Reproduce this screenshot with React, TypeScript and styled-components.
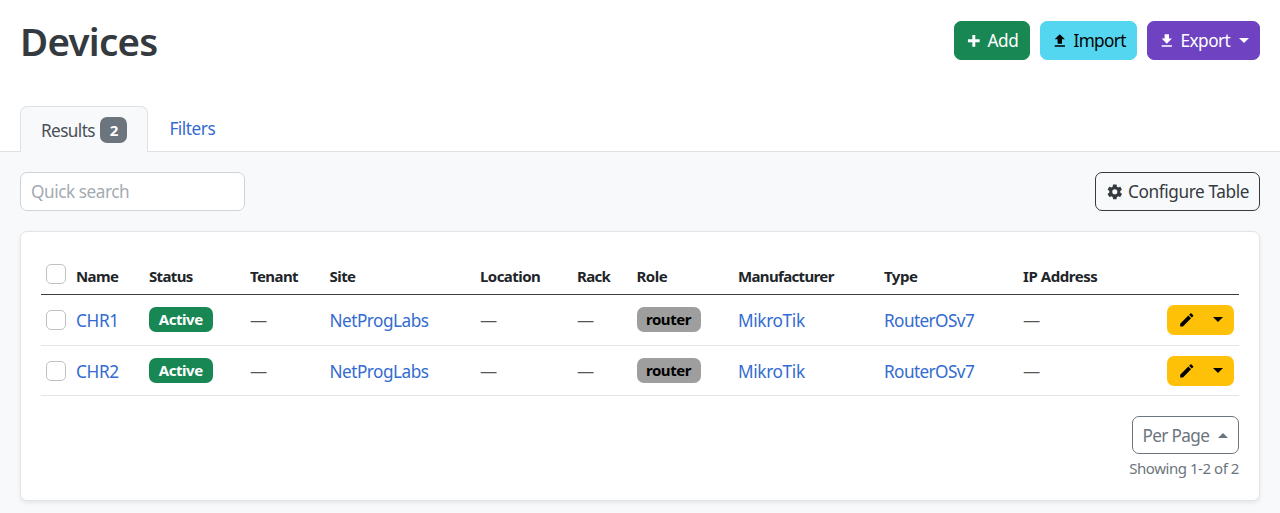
import React from "react";
import styled, { createGlobalStyle } from "styled-components";

const GlobalStyle = createGlobalStyle`
  * { box-sizing: border-box; }
  body {
    margin: 0;
    background: #f8f9fb;
    color: #212529;
    font-family: "Noto Sans", "Open Sans", sans-serif;
    font-size: 17.2px;
    line-height: 26px;
  }
`;

const Page = styled.main`
  height: 513px;
  overflow: hidden;
`;

const Header = styled.header`
  display: flex;
  justify-content: space-between;
  align-items: flex-start;
  height: 106px;
  padding: 21px 20px 0;
  background: #fff;
`;

const Title = styled.h1`
  margin: -1px 0 0;
  font-size: 38.5px;
  line-height: 42px;
  font-weight: 600;
  letter-spacing: -0.75px;
  color: #343a40;
`;

const Actions = styled.div`
  display: flex;
  gap: 10.5px;
`;

const Button = styled.button<{ $bg?: string; $fg: string; $width: number; $height?: number; $outline?: string; $ls?: number }>`
  display: flex;
  align-items: center;
  width: ${(p) => p.$width}px;
  height: ${(p) => p.$height ?? 39}px;
  padding: 0 10px;
  border: 1px solid ${(p) => p.$outline ?? p.$bg};
  border-radius: 7px;
  background: ${(p) => p.$bg ?? "transparent"};
  color: ${(p) => p.$fg};
  font: inherit;
  letter-spacing: ${(p) => p.$ls ?? -0.4}px;
  white-space: nowrap;
  svg { flex: none; margin-right: 4.5px; }
`;

const PerPageButton = styled(Button)`
  padding-top: 2px;
`;

const Caret = styled.span<{ $up?: boolean }>`
  margin-left: auto;
  border: 5px solid transparent;
  border-width: ${(p) => (p.$up ? "0 5px 5px" : "5px 5px 0")};
  border-${(p) => (p.$up ? "bottom" : "top")}-color: currentColor;
`;

const Tabs = styled.nav`
  display: flex;
  height: 46px;
  padding-left: 20px;
  background: #fff;
  border-bottom: 1px solid #dee2e6;
`;

const Tab = styled.a<{ $active?: boolean }>`
  display: flex;
  align-items: center;
  height: 46px;
  padding: ${(p) => (p.$active ? "2px 20px 0" : "0 20px 2px 20px")};
  border: 1px solid ${(p) => (p.$active ? "#dee2e6" : "transparent")};
  border-bottom: 0;
  border-radius: 7px 7px 0 0;
  background: ${(p) => (p.$active ? "#f8f9fb" : "transparent")};
  color: ${(p) => (p.$active ? "#495057" : "#336bd0")};
  letter-spacing: ${(p) => (p.$active ? -0.6 : -0.45)}px;
`;

const Badge = styled.span<{ $bg: string; $fg: string; $width: number }>`
  display: inline-flex;
  align-items: center;
  justify-content: center;
  width: ${(p) => p.$width}px;
  height: 25px;
  border-radius: 7px;
  background: ${(p) => p.$bg};
  color: ${(p) => p.$fg};
  font-size: 15px;
  font-weight: 700;
  letter-spacing: -0.45px;
`;

const TabBadge = styled(Badge)`
  height: 26px;
  margin: -1px 0 0 1.3px;
`;

const BadgeCell = styled.div`
  display: flex;
  padding-bottom: 1px;
`;

const Toolbar = styled.div`
  display: flex;
  justify-content: space-between;
  padding: 20px 20px 0;
`;

const Search = styled.input`
  width: 225px;
  height: 39px;
  padding: 0 10px;
  border: 1px solid #ced4da;
  border-radius: 7px;
  background: #fff;
  font: inherit;
  letter-spacing: -0.45px;
  &::placeholder { color: #a3abb2; opacity: 1; }
`;

const Card = styled.section`
  height: 270px;
  margin: 20px 20px 0;
  padding: 20px;
  border: 1px solid #e2e4e8;
  border-radius: 7px;
  background: #fff;
  box-shadow: 0 2px 4px rgba(0, 0, 0, 0.075);
`;

const Row = styled.div<{ $head?: boolean }>`
  display: grid;
  grid-template-columns: 35px 73px 101px 79.5px 150.5px 97px 59.5px 101.5px 146px 139px 1fr;
  align-items: center;
  height: ${(p) => (p.$head ? 43 : 50.7)}px;
  padding-top: ${(p) => (p.$head ? 6 : 0)}px;
  border-bottom: 1px solid ${(p) => (p.$head ? "#3a3f44" : "#e3e5e8")};
`;

const HeadCell = styled.span<{ $ls: number }>`
  font-size: 15px;
  font-weight: 700;
  letter-spacing: ${(p) => p.$ls}px;
`;

const Check = styled.input<{ $raise?: boolean }>`
  appearance: none;
  width: 20px;
  height: 20px;
  margin: ${(p) => (p.$raise ? "0 0 4px 5px" : "1px 0 0 5px")};
  border: 1px solid #bfc1c3;
  border-radius: 5px;
  background: #fff;
`;

const Link = styled.a<{ $ls?: number }>`
  padding-top: 2px;
  color: #336bd0;
  letter-spacing: ${(p) => p.$ls ?? -0.35}px;
`;

const Dash = styled.span`
  padding-top: 2px;
  color: #555;
`;

const LastCell = styled.div`
  display: flex;
  align-items: center;
  justify-content: space-between;
`;

const EditGroup = styled.div`
  display: flex;
  align-items: center;
  width: 67px;
  height: 30px;
  margin-right: 5px;
  padding: 0 11px;
  border-radius: 7px;
  background: #ffc107;
  color: #000;
`;

const Footer = styled.footer`
  display: flex;
  flex-direction: column;
  align-items: flex-end;
  padding-top: 19.6px;
`;

const Showing = styled.small`
  margin-top: 1px;
  font-size: 15px;
  color: #6c757d;
  letter-spacing: -0.45px;
`;

const icons = {
  plus: "M20 14H14V20H10V14H4V10H10V4H14V10H20V14Z",
  upload: "M9,16V10H5L12,3L19,10H15V16H9M5,20V18H19V20H5Z",
  download: "M5,20H19V18H5M19,9H15V3H9V9H5L12,16L19,9Z",
  cog: "M12,15.5A3.5,3.5 0 0,1 8.5,12A3.5,3.5 0 0,1 12,8.5A3.5,3.5 0 0,1 15.5,12A3.5,3.5 0 0,1 12,15.5M19.43,12.97C19.47,12.65 19.5,12.33 19.5,12C19.5,11.67 19.47,11.34 19.43,11L21.54,9.37C21.73,9.22 21.78,8.95 21.66,8.73L19.66,5.27C19.54,5.05 19.27,4.96 19.05,5.05L16.56,6.05C16.04,5.66 15.5,5.32 14.87,5.07L14.5,2.42C14.46,2.18 14.25,2 14,2H10C9.75,2 9.54,2.18 9.5,2.42L9.13,5.07C8.5,5.32 7.96,5.66 7.44,6.05L4.95,5.05C4.73,4.96 4.46,5.05 4.34,5.27L2.34,8.73C2.21,8.95 2.27,9.22 2.46,9.37L4.57,11C4.53,11.34 4.5,11.67 4.5,12C4.5,12.33 4.53,12.65 4.57,12.97L2.46,14.63C2.27,14.78 2.21,15.05 2.34,15.27L4.34,18.73C4.46,18.95 4.73,19.03 4.95,18.95L7.44,17.94C7.96,18.34 8.5,18.68 9.13,18.93L9.5,21.58C9.54,21.82 9.75,22 10,22H14C14.25,22 14.46,21.82 14.5,21.58L14.87,18.93C15.5,18.67 16.04,18.34 16.56,17.94L19.05,18.95C19.27,19.03 19.54,18.95 19.66,18.73L21.66,15.27C21.78,15.05 21.73,14.78 21.54,14.63L19.43,12.97Z",
  pencil: "M20.71,7.04C21.1,6.65 21.1,6 20.71,5.63L18.37,3.29C18,2.9 17.35,2.9 16.96,3.29L15.12,5.12L18.87,8.87M3,17.25V21H6.75L17.81,9.93L14.06,6.18L3,17.25Z",
};

const Icon = ({ name }: { name: keyof typeof icons }) => (
  <svg width={17.6} height={17.6} viewBox="0 0 24 24" fill="currentColor" aria-hidden="true">
    <path d={icons[name]} />
  </svg>
);

const columns: [string, number][] = [
  ["Name", -0.6], ["Status", -0.65], ["Tenant", -0.6], ["Site", -0.55], ["Location", -0.55],
  ["Rack", -0.7], ["Role", -0.5], ["Manufacturer", -0.65], ["Type", -0.5], ["IP Address", -0.45],
];

const DeviceRow = ({ name }: { name: string }) => (
  <Row>
    <Check type="checkbox" />
    <Link>{name}</Link>
    <BadgeCell><Badge $bg="#198754" $fg="#fff" $width={63.5}>Active</Badge></BadgeCell>
    <Dash>—</Dash>
    <Link $ls={-0.5}>NetProgLabs</Link>
    <Dash>—</Dash>
    <Dash>—</Dash>
    <BadgeCell><Badge $bg="#9e9e9e" $fg="#000" $width={64}>router</Badge></BadgeCell>
    <Link>MikroTik</Link>
    <Link $ls={-0.6}>RouterOSv7</Link>
    <LastCell>
      <Dash>—</Dash>
      <EditGroup>
        <Icon name="pencil" />
        <Caret />
      </EditGroup>
    </LastCell>
  </Row>
);

export default function App() {
  return (
    <Page>
      <GlobalStyle />
      <Header>
        <Title>Devices</Title>
        <Actions>
          <Button $bg="#198754" $fg="#fff" $width={75.5}><Icon name="plus" />Add</Button>
          <Button $bg="#54d6f0" $fg="#000" $width={96.5} $ls={-0.6}><Icon name="upload" />Import</Button>
          <Button $bg="#6f42c1" $fg="#fff" $width={112.7} $ls={-0.5}><Icon name="download" />Export<Caret /></Button>
        </Actions>
      </Header>
      <Tabs>
        <Tab $active>Results&nbsp;<TabBadge $bg="#6c757d" $fg="#fff" $width={27.3}>2</TabBadge></Tab>
        <Tab>Filters</Tab>
      </Tabs>
      <Toolbar>
        <Search placeholder="Quick search" />
        <Button $fg="#343a40" $outline="#343a40" $width={165}><Icon name="cog" />Configure Table</Button>
      </Toolbar>
      <Card>
        <Row $head>
          <Check type="checkbox" $raise />
          {columns.map(([label, ls]) => <HeadCell key={label} $ls={ls}>{label}</HeadCell>)}
        </Row>
        <DeviceRow name="CHR1" />
        <DeviceRow name="CHR2" />
        <Footer>
          <PerPageButton $fg="#6c757d" $outline="#6c757d" $width={107.5} $height={38} $ls={-0.65}>Per Page<Caret $up /></PerPageButton>
          <Showing>Showing 1-2 of 2</Showing>
        </Footer>
      </Card>
    </Page>
  );
}
